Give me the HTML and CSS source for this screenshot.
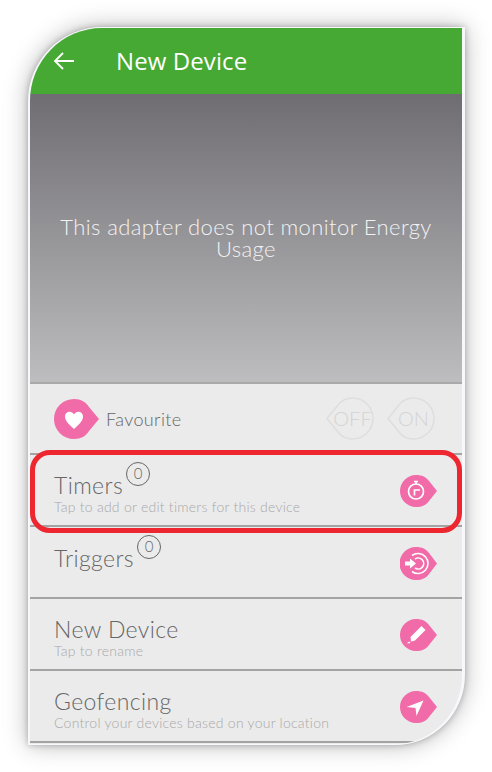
FILE: index.html
```html
<!DOCTYPE html>
<html lang="en">
<head>
    <meta charset="UTF-8">
    <meta name="viewport" content="width=device-width, initial-scale=1.0">
    <title>New Device</title>
    <link rel="stylesheet" href="styles.css">
</head>
<body>

    <div class="phone">
        <!-- Header -->
        <div class="header">
            <svg class="back" width="22" height="18" viewBox="0 0 22 18">
                <path d="M21 9H2M10 1L2 9l8 8" fill="none" stroke="#fff" stroke-width="1.800"/>
            </svg>
            <span class="header-title">New Device</span>
        </div>

        <!-- Energy panel -->
        <div class="energy">
            <p>This adapter does not monitor Energy Usage</p>
        </div>

        <!-- Favourite row -->
        <div class="fav-row">
            <svg class="fav-icon" width="45" height="40" viewBox="0 0 45 40">
                <path class="pink" d="M20 0C27 0 32 3 35 8L45 20L35 32C32 37 27 40 20 40A20 20 0 0 1 20 0Z"/>
                <path d="M20 30C14.500 25 11 21.500 11 17.500C11 12.500 17.500 11 20 15.500C22.500 11 29 12.500 29 17.500C29 21.500 25.500 25 20 30Z" fill="#fff"/>
            </svg>
            <span class="fav-label">Favourite</span>
            <div class="switches">
                <div class="switch">
                    <svg width="48" height="43" viewBox="0 0 48 43">
                        <path class="tear-outline" d="M47 21.500A20.500 20.500 0 0 1 26.500 42C20 42 15 39 12 35L1 21.500L12 8C15 4 20 1 26.500 1A20.500 20.500 0 0 1 47 21.500Z"/>
                    </svg>
                    <span class="switch-text">OFF</span>
                </div>
                <div class="switch">
                    <svg width="48" height="43" viewBox="0 0 48 43">
                        <path class="tear-outline" d="M47 21.500A20.500 20.500 0 0 1 26.500 42C20 42 15 39 12 35L1 21.500L12 8C15 4 20 1 26.500 1A20.500 20.500 0 0 1 47 21.500Z"/>
                    </svg>
                    <span class="switch-text">ON</span>
                </div>
            </div>
        </div>

        <!-- Timers -->
        <div class="row">
            <div class="row-text">
                <div class="row-title">Timers<span class="count">0</span></div>
                <div class="row-sub">Tap to add or edit timers for this device</div>
            </div>
            <svg class="row-icon" width="37" height="32" viewBox="0 0 37 32">
                <path class="pink" d="M16 0C22 0 26 2 29 6L37 16L29 26C26 30 22 32 16 32A16 16 0 0 1 16 0Z"/>
                <circle cx="16" cy="16.500" r="7.500" fill="none" stroke="#fff" stroke-width="1.700"/>
                <path d="M16 9V6.500M14 6.500h4M14.500 20.500v-5.500h5.500" fill="none" stroke="#fff" stroke-width="1.700"/>
            </svg>
        </div>

        <!-- Triggers -->
        <div class="row">
            <div class="row-text">
                <div class="row-title trigger-title">Triggers<span class="count">0</span></div>
            </div>
            <svg class="row-icon" width="37" height="33" viewBox="0 0 37 33">
                <path class="pink" d="M16 0C22 0 26 2 29 6L37 16.500L29 27C26 31 22 33 16 33A16.500 16.500 0 0 1 16 0Z"/>
                <path d="M12 8.500A10 10 0 1 1 12 24.500M15 12A5.500 5.500 0 1 1 15 21" fill="none" stroke="#fff" stroke-width="1.600"/>
                <path d="M5 14.500H10V11.500L16 16.500L10 21.500V18.500H5Z" fill="#fff"/>
            </svg>
        </div>

        <!-- Rename -->
        <div class="row">
            <div class="row-text">
                <div class="row-title">New Device</div>
                <div class="row-sub">Tap to rename</div>
            </div>
            <svg class="row-icon" width="37" height="32" viewBox="0 0 37 32">
                <path class="pink" d="M16 0C22 0 26 2 29 6L37 16L29 26C26 30 22 32 16 32A16 16 0 0 1 16 0Z"/>
                <path d="M21.500 7L25.500 11L15 21.500L11 22.500L10.500 18Z M7.500 23.500l2-1 1 1.500-3 .5Z" fill="#fff"/>
            </svg>
        </div>

        <!-- Geofencing -->
        <div class="row row-last">
            <div class="row-text">
                <div class="row-title">Geofencing</div>
                <div class="row-sub">Control your devices based on your location</div>
            </div>
            <svg class="row-icon" width="37" height="32" viewBox="0 0 37 32">
                <path class="pink" d="M16 0C22 0 26 2 29 6L37 16L29 26C26 30 22 32 16 32A16 16 0 0 1 16 0Z"/>
                <path d="M23.500 9.500L16.500 25L15.500 17L6.500 16Z" fill="#fff"/>
            </svg>
        </div>

        <!-- Highlight drawn over the timers row -->
        <div class="highlight"></div>
    </div>

</body>
</html>
```

FILE: styles.css
```css
/* General styles */
body {
    box-sizing: border-box;
    min-height: 100vh;
    margin: 0;
    padding: 27px 0 0 28px;
    background-color: #fff;
    font-family: "Lato", "Open Sans", sans-serif;
    color: #666;
}

.phone {
    position: relative;
    box-sizing: border-box;
    width: 437px;
    height: 718px;
    background-color: #ebebeb;
    border-style: solid;
    border-color: #f6f8fb;
    border-width: 1px 3px 1px 2px;
    border-radius: 74px 0 70px 0;
    box-shadow: 0 0 6px rgba(0, 0, 0, 0.25), 0 0 24px rgba(0, 0, 0, 0.28);
    overflow: hidden;
}

/* Header */
.header {
    display: flex;
    align-items: center;
    box-sizing: border-box;
    height: 66px;
    padding: 0 0 1px 23px;
    background-color: #46a933;
}

.back {
    margin-right: 41px;
}

.header-title {
    font-family: "Open Sans", sans-serif;
    font-size: 24px;
    letter-spacing: 0.1px;
    color: #fff;
}

/* Energy panel */
.energy {
    display: flex;
    align-items: center;
    justify-content: center;
    box-sizing: border-box;
    height: 288px;
    padding: 0 24px;
    background: linear-gradient(#6f6d72, #bdbdbf);
}

.energy p {
    margin: 0;
    font-size: 22px;
    font-weight: 300;
    line-height: 22px;
    letter-spacing: 0.4px;
    text-align: center;
    color: #f2f2f2;
}

/* Rows */
.fav-row {
    display: flex;
    align-items: center;
    box-sizing: border-box;
    height: 71px;
    padding: 0 27px 0 24px;
    border-top: 2px solid #a9a9a9;
}

.fav-icon {
    margin-right: 7px;
}

.fav-label {
    font-size: 18px;
    font-weight: 300;
    letter-spacing: 0.4px;
}

.switches {
    display: flex;
    gap: 13px;
    margin-left: auto;
}

.switch {
    position: relative;
    width: 48px;
    height: 43px;
}

.switch-text {
    position: absolute;
    top: 0;
    left: 5px;
    right: 0;
    font-size: 20px;
    font-weight: 300;
    line-height: 43px;
    text-align: center;
    color: #d4d4d4;
}

.tear-outline {
    fill: none;
    stroke: #dedede;
    stroke-width: 1.5;
}

.pink {
    fill: #f06ba8;
}

.row {
    display: flex;
    align-items: center;
    justify-content: space-between;
    box-sizing: border-box;
    height: 72px;
    padding: 6px 25px 0 24px;
    border-top: 2px solid #a3a3a3;
}

.row-last {
    height: 74px;
    border-bottom: 2px solid #a3a3a3;
}

.row-icon {
    margin-bottom: 4px;
}

.row-title {
    font-size: 23px;
    font-weight: 300;
    line-height: 26px;
    letter-spacing: 0.4px;
}

.trigger-title {
    margin-bottom: 14px;
}

.row-sub {
    font-size: 14px;
    font-weight: 300;
    line-height: 17px;
    letter-spacing: 0.25px;
    color: #a8a8a8;
}

.count {
    display: inline-block;
    position: relative;
    top: -14px;
    box-sizing: border-box;
    width: 24px;
    height: 24px;
    margin: -12px 0 -12px 3px;
    border: 1.5px solid #666;
    border-radius: 50%;
    font-size: 15px;
    line-height: 20px;
    letter-spacing: 0;
    text-align: center;
    vertical-align: middle;
}

/* Red box over the timers row */
.highlight {
    position: absolute;
    top: 422px;
    left: 0;
    width: 432px;
    height: 83px;
    box-sizing: border-box;
    border: 5px solid #ee2630;
    border-radius: 20px;
}
```
